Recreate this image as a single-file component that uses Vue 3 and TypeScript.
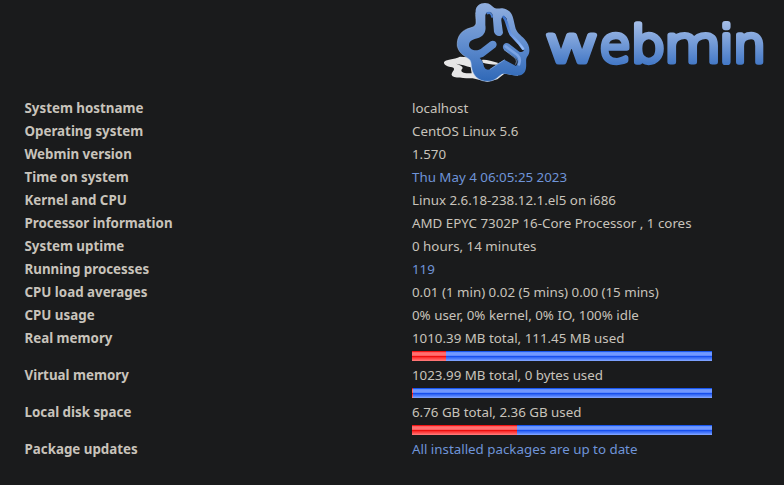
<script setup lang="ts">
interface Row {
  label: string
  value: string
  link?: boolean
  used?: number
}

const rows: Row[] = [
  { label: 'System hostname', value: 'localhost' },
  { label: 'Operating system', value: 'CentOS Linux 5.6' },
  { label: 'Webmin version', value: '1.570' },
  { label: 'Time on system', value: 'Thu May 4 06:05:25 2023', link: true },
  { label: 'Kernel and CPU', value: 'Linux 2.6.18-238.12.1.el5 on i686' },
  { label: 'Processor information', value: 'AMD EPYC 7302P 16-Core Processor , 1 cores' },
  { label: 'System uptime', value: '0 hours, 14 minutes' },
  { label: 'Running processes', value: '119', link: true },
  { label: 'CPU load averages', value: '0.01 (1 min) 0.02 (5 mins) 0.00 (15 mins)' },
  { label: 'CPU usage', value: '0% user, 0% kernel, 0% IO, 100% idle' },
  { label: 'Real memory', value: '1010.39 MB total, 111.45 MB used', used: 34 },
  { label: 'Virtual memory', value: '1023.99 MB total, 0 bytes used', used: 1 },
  { label: 'Local disk space', value: '6.76 GB total, 2.36 GB used', used: 105 },
  { label: 'Package updates', value: 'All installed packages are up to date', link: true },
]
</script>

<template>
  <main class="page">
    <header class="brand">
      <svg class="logo" width="348" height="90" viewBox="0 0 348 90" role="img" aria-label="webmin">
        <defs>
          <linearGradient id="mark" gradientUnits="userSpaceOnUse" x1="0" y1="9" x2="0" y2="244">
            <stop offset="0" stop-color="#91afdf" />
            <stop offset="0.5" stop-color="#638fd0" />
            <stop offset="1" stop-color="#2f68b7" />
          </linearGradient>
          <linearGradient id="gloss" gradientUnits="userSpaceOnUse" x1="200" y1="50" x2="245" y2="150">
            <stop offset="0" stop-color="#3a6fc6" />
            <stop offset="1" stop-color="#93bbfb" />
          </linearGradient>
          <linearGradient id="word" gradientUnits="userSpaceOnUse" x1="0" y1="21" x2="0" y2="65">
            <stop offset="0" stop-color="#a6bfe8" />
            <stop offset="1" stop-color="#4378c6" />
          </linearGradient>
        </defs>
        <g transform="scale(0.33333)">
          <path
            fill="#e6e6e6"
            fill-rule="evenodd"
            d="M24 187C28 176 54 180 72 170L96 172L108 182L150 180C172 178 196 190 240 196L246 227L205 221L184 238L154 245L110 235C88 234 50 236 47 225C45 216 60 209 52 203C43 201 22 198 24 187ZM60 191C75 197 84 200 78 207C71 215 84 221 107 220L104 202C92 198 74 193 60 191Z"
          />
          <path
            fill="url(#mark)"
            d="M119 37C117 20 130 9 147 9C163 9 168 20 178 25C189 28 195 21 210 28C230 36 232 56 237 78C241 99 253 103 266 118C283 137 284 158 273 171C268 179 272 190 270 204C268 221 256 228 240 227C222 226 211 219 199 222C185 230 178 244 154 244C128 244 113 228 108 208C105 196 107 188 102 180C92 170 70 164 64 139C62 114 72 96 93 87C109 81 121 81 120 66Z"
          />
          <path
            class="edge"
            d="M119 37C117 45 121 57 120 66C121 81 109 81 93 87C72 96 62 114 64 139C70 164 92 170 102 180C107 188 105 196 108 208C113 228 128 244 154 244C178 244 185 230 199 222"
          />
          <path
            fill="#1a1b1c"
            d="M148 46C151 32 168 34 170 46L174 96C180 113 198 111 201 98L196 62C195 48 206 46 212 56L216 84C222 107 238 119 251 131L264 144C266 154 258 158 250 155L219 131C205 124 195 140 204 149L239 174C247 181 246 191 240 198L205 179L187 190L162 208Q150 213 144 200Q141 182 131 174L142 170L179 142C188 130 175 117 162 125L134 147C120 156 99 149 99 135C100 117 119 119 132 112C144 105 151 94 148 76Z"
          />
          <path fill="#e6e6e6" d="M138 180C150 178 166 184 187 189L181 194C166 193 150 191 141 188Z" />
          <path class="prong" d="M152 41C162 35 167 41 169 53" />
          <path class="gloss" d="M203 51C214 62 214 87 225 104L248 129L261 146" />
          <path class="knob" d="M209 139L244 165C253 173 253 182 249 193" />
          <path class="shine" d="M204 149L237 174C243 181 242 188 238 194M206 179L162 208" />
        </g>
        <g class="wordmark" fill="url(#word)" stroke="url(#word)">
          <text class="wide" x="109" y="62.2" textLength="55" lengthAdjust="spacingAndGlyphs">w</text>
          <text x="163.4" y="62.2" textLength="31" lengthAdjust="spacingAndGlyphs">e</text>
          <text x="194.8" y="62.2" textLength="34.4" lengthAdjust="spacingAndGlyphs">b</text>
          <text class="wide" x="227.8" y="62.2" textLength="57.5" lengthAdjust="spacingAndGlyphs">m</text>
          <text class="dotted" x="283.8" y="61.8">i</text>
          <text x="297" y="62.2" textLength="33" lengthAdjust="spacingAndGlyphs">n</text>
        </g>
      </svg>
    </header>
    <dl class="details">
      <div v-for="row in rows" :key="row.label" class="row">
        <dt>{{ row.label }}</dt>
        <dd>
          <a v-if="row.link" class="link">{{ row.value }}</a>
          <span v-else>{{ row.value }}</span>
          <div v-if="row.used !== undefined" class="meter">
            <i class="used" :style="{ width: row.used + 'px' }"></i>
          </div>
        </dd>
      </div>
    </dl>
  </main>
</template>

<style>
body {
  background: #1a1b1c;
}
</style>

<style scoped>
.page {
  height: 485px;
  overflow: hidden;
  background: #1a1b1c;
  color: #c8c3bb;
  font: 13.333px/23px "Noto Sans", sans-serif;
}
.brand {
  display: flex;
  justify-content: flex-end;
  height: 97px;
}
.logo {
  display: block;
}
.edge {
  fill: none;
  stroke: #a9c9f2;
  stroke-width: 1.5;
}
.shine {
  fill: none;
  stroke: #8fb5ef;
  stroke-width: 2;
}
.prong {
  fill: none;
  stroke: #4a7ccb;
  stroke-width: 6;
}
.knob {
  fill: none;
  stroke: #7ba3e3;
  stroke-width: 8;
  stroke-linecap: round;
}
.gloss {
  fill: none;
  stroke: url(#gloss);
  stroke-width: 8;
  stroke-linecap: round;
}
.wordmark {
  font: 200 49px "DejaVu Sans Light", "DejaVu Sans", sans-serif;
  stroke-width: 5.4;
  stroke-linejoin: round;
}
.wide {
  stroke-width: 5;
}
.dotted {
  stroke-width: 6.2;
}
.details {
  margin: 0;
  padding-left: 24.5px;
}
.row {
  display: grid;
  grid-template-columns: 387.5px 1fr;
}
dt {
  font-weight: 700;
}
dd {
  margin: 0;
}
.link {
  color: #6f94d8;
}
.meter {
  width: 300px;
  height: 10px;
  margin: 1px 0 3px;
  background: linear-gradient(#1a56ee 0 1px, #6293ff 1px 2px, #7298ff 2px 4px, #5e8aff 4px 5px, #174fee 5px 6px, #3468f5 6px 7px, #4778fb 7px 8px, #608bff 8px 9px, #7ba0ff 9px);
}
.used {
  display: block;
  height: 10px;
  background: linear-gradient(#f01515 0 1px, #ff5e5e 1px 2px, #ff7070 2px 4px, #ff5d5d 4px 5px, #ed0e0e 5px 6px, #f93030 6px 7px, #ff4545 7px 8px, #ff5c5c 8px 9px, #ff7474 9px);
}
</style>
